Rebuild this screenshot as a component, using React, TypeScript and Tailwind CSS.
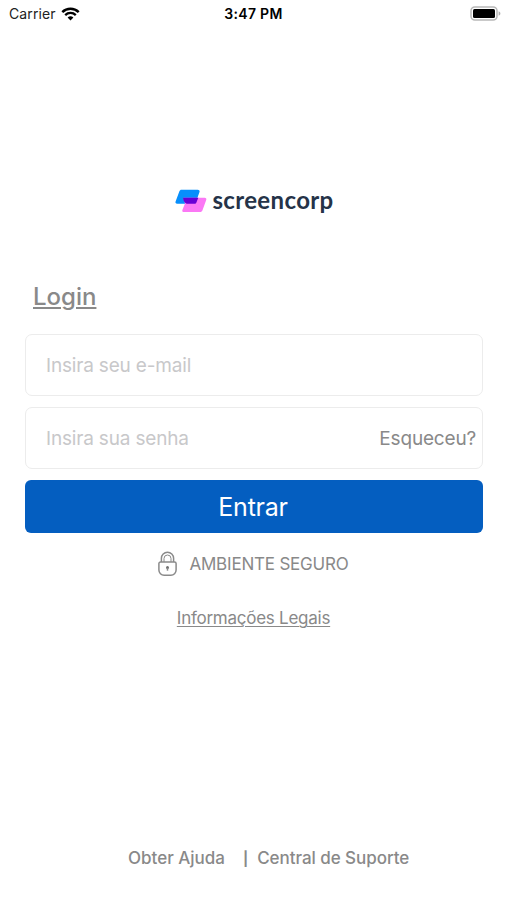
function WifiIcon() {
  return (
    <svg width="19" height="14" viewBox="0 0 19 14" fill="none" aria-hidden="true">
      <path d="M1.3 5.1a11.8 11.8 0 0 1 16.4 0" stroke="#000" strokeWidth="2.5" />
      <path d="M4.2 8.1a7.6 7.6 0 0 1 10.6 0" stroke="#000" strokeWidth="2.3" />
      <path d="M6.6 10.6a4.2 4.2 0 0 1 5.8 0L9.5 13.6Z" fill="#000" />
    </svg>
  );
}

function BatteryIcon() {
  return (
    <svg width="31" height="16" viewBox="0 0 31 16" fill="none" aria-hidden="true">
      <rect x="1" y="1" width="26" height="13" rx="3.8" fill="#fff" stroke="#b8b8b8" strokeWidth="1.5" />
      <rect x="3" y="3" width="22" height="9" rx="1.5" fill="#000" />
      <path d="M28.6 5.3c2.4.8 2.4 3.7 0 4.5Z" fill="#b0b0b0" />
    </svg>
  );
}

function LogoMark() {
  return (
    <svg width="32" height="24" viewBox="0 0 32 24" aria-hidden="true">
      <path d="M6.6.8H22.6c1.7 0 2.4 1 1.9 2.3L20.8 13.2c-.4 1-1 1.5-2.1 1.5H2.2C.7 14.7.1 13.8.6 12.5L4.3 2.6C4.8 1.4 5.4.8 6.6.8Z" fill="#078ffc" />
      <path d="M10.8 8.8H29.6c1.5 0 2.1 1 1.6 2.2L27.5 21.3c-.5 1.2-1.2 1.8-2.4 1.8H9c-1.5 0-2.1-.9-1.6-2.2L10 14.5 8.2 8.8Z" fill="#fb78f5" />
      <path d="M8 8.8H23.3L21.5 13.2c-.4 1-1 1.5-2.1 1.5H11.6C9.4 13.5 8.3 11.8 8 8.8Z" fill="#6700d5" />
    </svg>
  );
}

function LockIcon() {
  return (
    <svg width="20" height="26" viewBox="0 0 20 26" fill="none" stroke="#8a8a8a" strokeWidth="1.5" aria-hidden="true">
      <path d="M3.4 11V7.3a6.1 6.1 0 0 1 12.2 0V11" />
      <path d="M6 11V7.5a3.5 3.5 0 0 1 7 0V11" strokeWidth="1" />
      <path d="M2.5 11h14a1.6 1.6 0 0 1 1.6 1.6v6.4a5.2 5.2 0 0 1-5.2 5.2H6.1A5.2 5.2 0 0 1 .9 19v-6.4A1.6 1.6 0 0 1 2.5 11Z" />
      <circle cx="9.5" cy="16.5" r="1.5" fill="#707070" stroke="none" />
      <path d="M9.5 17v2.7" />
    </svg>
  );
}

export default function App() {
  return (
    <main className="flex h-[900px] w-full flex-col bg-white font-['Inter','Liberation_Sans',sans-serif] text-[#898989]">
      <header className="grid h-7 grid-cols-3 items-center text-black">
        <div className="flex items-center gap-[5px] pl-[9px]">
          <span className="pb-[2px] text-[14px] tracking-[0.1px] text-[#222]">Carrier</span>
          <WifiIcon />
        </div>
        <span className="pb-[2px] text-center text-[14px] font-semibold tracking-[0.3px]">3:47 PM</span>
        <div className="flex justify-end pr-[6px]">
          <BatteryIcon />
        </div>
      </header>

      <div className="mt-[158px] flex h-[30px] items-center justify-center gap-[5px] pl-[2px]">
        <LogoMark />
        <span className="pb-[3px] font-['Lato',sans-serif] text-[24px] leading-[30px] font-bold tracking-[0.35px] text-[#253348]">screencorp</span>
      </div>

      <h1 className="mt-[63px] ml-[33px] flex h-9 items-center text-[24px] font-medium">
        <span className="underline decoration-2 underline-offset-[2px]">Login</span>
      </h1>

      <form className="mt-[19px] flex flex-col pr-[24px] pl-[25px]">
        <div className="flex h-[62px] items-center rounded-[7px] border border-[#ececec] pl-5">
          <input
            className="w-full pt-[2px] text-[19px] tracking-[-0.18px] outline-none placeholder:text-[#c8c8ca]"
            type="email"
            placeholder="Insira seu e-mail"
          />
        </div>
        <div className="mt-[11px] flex h-[62px] items-center rounded-[7px] border border-[#ececec] pr-[6px] pl-5">
          <input
            className="min-w-0 flex-1 pt-[2px] text-[19px] tracking-[-0.18px] outline-none placeholder:text-[#c8c8ca]"
            type="password"
            placeholder="Insira sua senha"
          />
          <a className="pt-[2px] text-[19px] tracking-[-0.18px]">Esqueceu?</a>
        </div>
        <button type="button" className="mt-[11px] h-[53px] rounded-[6px] bg-[#045ec0] pt-[2px] pr-[2px] text-[25px] tracking-[-0.25px] text-white">
          Entrar
        </button>
      </form>

      <div className="mt-[17px] flex h-[28px] items-center justify-center gap-[11px]">
        <LockIcon />
        <span className="pt-[2px] text-[17px] tracking-[-0.2px]">AMBIENTE SEGURO</span>
      </div>

      <a className="mt-[28px] self-center text-[17px] leading-[24px] tracking-[-0.25px] underline decoration-1 underline-offset-[2px]">
        Informações Legais
      </a>

      <footer className="mt-auto mb-[29px] ml-[128px] flex h-6 items-center text-[17px] font-medium whitespace-pre">
        <span>Obter Ajuda</span>
        <span className="ml-[18px] text-[14px] leading-[18px] font-bold">|</span>
        <span className="ml-[9px] tracking-[-0.05px]">Central de Suporte</span>
      </footer>
    </main>
  );
}
